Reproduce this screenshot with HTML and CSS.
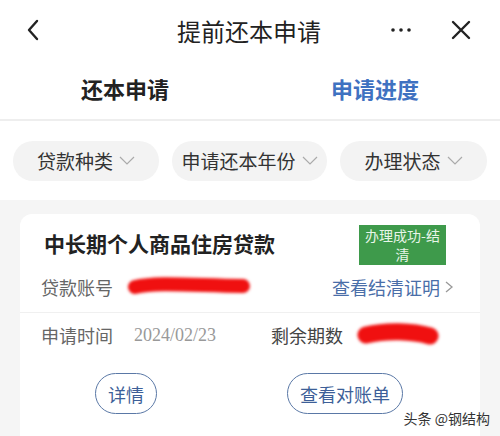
FILE: index.html
```html
<!DOCTYPE html>
<html lang="zh-CN">
<head>
    <meta charset="UTF-8">
    <meta name="viewport" content="width=device-width, initial-scale=1.0">
    <title>提前还本申请</title>
    <link rel="stylesheet" href="styles.css">
</head>
<body>

    <!-- Top Bar -->
    <div class="top-bar">
        <div class="bar-left">
            <svg width="14" height="24" viewBox="0 0 14 24">
                <polyline points="11,3 3,12 11,21" fill="none" stroke="#222" stroke-width="2.4" stroke-linecap="round" stroke-linejoin="round"/>
            </svg>
        </div>
        <h1>提前还本申请</h1>
        <div class="bar-right">
            <svg class="more" width="22" height="6" viewBox="0 0 22 6">
                <circle cx="3" cy="3" r="1.8" fill="#222"/>
                <circle cx="11" cy="3" r="1.8" fill="#222"/>
                <circle cx="19" cy="3" r="1.8" fill="#222"/>
            </svg>
            <svg width="22" height="22" viewBox="0 0 22 22">
                <path d="M3 3 L19 19 M19 3 L3 19" stroke="#222" stroke-width="2.4" stroke-linecap="round"/>
            </svg>
        </div>
    </div>

    <!-- Tabs -->
    <div class="tabs">
        <div class="tab">还本申请</div>
        <div class="tab link">申请进度</div>
    </div>

    <!-- Filters -->
    <div class="filters">
        <div class="chip">贷款种类 <svg width="16" height="10" viewBox="0 0 16 10"><polyline points="1,1 8,8 15,1" fill="none" stroke="#aaa" stroke-width="1.2"/></svg></div>
        <div class="chip">申请还本年份 <svg width="16" height="10" viewBox="0 0 16 10"><polyline points="1,1 8,8 15,1" fill="none" stroke="#aaa" stroke-width="1.2"/></svg></div>
        <div class="chip">办理状态 <svg width="16" height="10" viewBox="0 0 16 10"><polyline points="1,1 8,8 15,1" fill="none" stroke="#aaa" stroke-width="1.2"/></svg></div>
    </div>

    <!-- List -->
    <div class="list">
        <div class="card">
            <div class="card-head">
                <h3>中长期个人商品住房贷款</h3>
                <span class="badge">办理成功-结清</span>
            </div>
            <div class="row">
                <span class="label">贷款账号</span>
                <svg class="scribble" width="124" height="22" viewBox="0 0 124 22">
                    <path d="M8 11 C30 6 60 9 116 10" stroke="#f01010" stroke-width="14" stroke-linecap="round" fill="none"/>
                </svg>
                <span class="proof">查看结清证明 <svg width="10" height="14" viewBox="0 0 10 14"><polyline points="2,2 8,7 2,12" fill="none" stroke="#999" stroke-width="1.3"/></svg></span>
            </div>
            <div class="row info">
                <div class="col">
                    <span class="label">申请时间</span>
                    <span class="date">2024/02/23</span>
                </div>
                <div class="col">
                    <span class="label dark">剩余期数</span>
                    <svg class="scribble" width="82" height="28" viewBox="0 0 82 28">
                        <path d="M9 14 C30 9 55 10 73 15" stroke="#f01010" stroke-width="17" stroke-linecap="round" fill="none"/>
                    </svg>
                </div>
            </div>
            <div class="actions">
                <button class="btn small">详情</button>
                <button class="btn">查看对账单</button>
            </div>
        </div>
    </div>

    <span class="watermark">头条 @钢结构</span>

</body>
</html>
```

FILE: styles.css
```css
/* Reset */
* {
    margin: 0;
    padding: 0;
    box-sizing: border-box;
}

body {
    font-family: "Noto Sans CJK SC", "Noto Sans", sans-serif;
    width: 500px;
    height: 436px;
    overflow: hidden;
    background: #f5f5f5;
    color: #222;
    position: relative;
}

/* Top Bar */
.top-bar {
    height: 60px;
    background: white;
    display: grid;
    grid-template-columns: 1fr auto 1fr;
    align-items: center;
    padding: 0 28px 0 26px;
}

.top-bar h1 {
    font-size: 24px;
    font-weight: 400;
}

.bar-left svg {
    display: block;
}

.bar-right {
    display: flex;
    align-items: center;
    justify-content: flex-end;
    gap: 38px;
}

/* Tabs */
.tabs {
    height: 61px;
    background: white;
    display: flex;
    align-items: center;
    border-bottom: 2px solid #eeeeee;
    padding-bottom: 4px;
}

.tab {
    flex: 1;
    text-align: center;
    font-size: 22px;
    font-weight: bold;
}

.tab.link {
    color: #3f72c1;
}

/* Filters */
.filters {
    height: 79px;
    background: white;
    display: flex;
    align-items: center;
    gap: 13px;
    padding: 0 13px;
}

.chip {
    height: 40px;
    background: #f3f3f3;
    border-radius: 20px;
    display: flex;
    align-items: center;
    justify-content: center;
    gap: 6px;
    font-size: 19px;
    color: #333;
}

.chip:nth-child(1) { width: 146px; }
.chip:nth-child(2) { width: 155px; }
.chip:nth-child(3) { width: 147px; }

/* List */
.list {
    padding: 14px 20px 0;
}

.card {
    background: white;
    border-radius: 12px;
    height: 240px;
}

.card-head {
    display: flex;
    align-items: flex-start;
    justify-content: space-between;
    padding: 11px 34px 0 24px;
}

.card-head h3 {
    font-size: 21px;
    font-weight: bold;
    margin-top: 3px;
}

.badge {
    width: 87px;
    height: 40px;
    background: #3e9a4b;
    color: #e8f5e9;
    font-size: 14px;
    line-height: 19px;
    text-align: center;
    padding: 1px 6px;
}

.row {
    display: flex;
    align-items: center;
    padding: 0 26px 4px 21px;
    height: 48px;
    border-bottom: 1px solid #f0f0f0;
}

.label {
    font-size: 18px;
    color: #666;
}

.label.dark {
    color: #444;
}

.scribble {
    margin-left: 14px;
    filter: blur(1.5px);
}

.proof {
    margin-left: auto;
    font-size: 18px;
    color: #4a6ea8;
    display: flex;
    align-items: center;
    gap: 4px;
}

.row.info {
    border-bottom: none;
    height: 50px;
    padding-bottom: 6px;
}

.col {
    display: flex;
    align-items: center;
    flex: 1;
}

.col:first-child {
    flex: 0 0 230px;
}

.date {
    font-family: "Liberation Serif", serif;
    font-size: 18px;
    color: #999;
    margin-left: 21px;
}

/* Buttons */
.actions {
    display: flex;
    padding: 10px 0 0 75px;
    gap: 130px;
}

.btn {
    height: 41px;
    padding: 0 12px;
    border: 1.5px solid #5a78a6;
    border-radius: 21px;
    background: white;
    color: #3d5f98;
    font-family: inherit;
    font-size: 18px;
}

.btn.small {
    width: 62px;
}

.watermark {
    position: absolute;
    right: 10px;
    bottom: 8px;
    font-size: 14px;
    color: #333;
    text-shadow: 0 0 2px white;
}
```
